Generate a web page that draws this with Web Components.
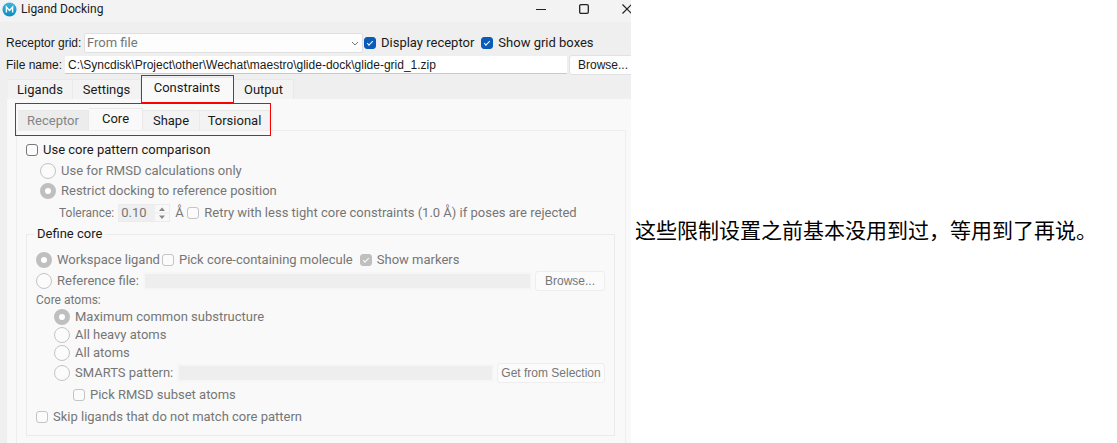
<!DOCTYPE html>
<html lang="en">
<head>
<meta charset="utf-8">
<title>Ligand Docking</title>
<style>
  body { margin: 0; background: #fff; color: #1a1a1a; font: 13px/18px Roboto, "Open Sans", sans-serif; }
</style>
</head>
<body>
<docking-page></docking-page>

<script>
const define = (name, html, setup) => {
  const template = document.createElement("template");
  template.innerHTML = html;
  customElements.define(name, class extends HTMLElement {
    constructor() {
      super();
      this.attachShadow({ mode: "open" }).append(template.content.cloneNode(true));
    }
    connectedCallback() {
      if (setup && !this.ready) { this.ready = true; setup(this, this.shadowRoot); }
    }
  });
};

define("option-box", `
  <style>
    :host { display: block; flex: none; }
    label { display: flex; align-items: center; gap: 5px; white-space: nowrap; }
    :host([disabled]) label { color: #767676; }
    input { appearance: none; box-sizing: border-box; flex: none; margin: 0; width: 12px; height: 12px;
            border: 1px solid #777; border-radius: 3px; background: #fbfbfb; display: grid; place-items: center; }
    input:disabled { border-color: #c4c4c4; }
    input:checked { border-color: #0a5cb8; background-color: #0a5cb8; }
    input:checked:disabled { border-color: #bfbfbf; background-color: #bfbfbf; }
    input:checked::after { content: ""; width: 5px; height: 2px; margin-bottom: 2px; border: solid #fff; border-width: 0 0 1px 1px; transform: rotate(-45deg); }
    input[type=radio] { width: 16px; height: 16px; border-radius: 50%; }
    input[type=radio]:checked { background: #fff; border: 5px solid #bfbfbf; }
    input[type=radio]:checked::after { content: none; }
  </style>
  <label><input><span><slot></slot></span></label>`,
  (host, root) => {
    const input = root.querySelector("input");
    input.type = host.getAttribute("type") || "checkbox";
    input.checked = host.hasAttribute("checked");
    input.disabled = host.hasAttribute("disabled");
  });

define("push-button", `
  <style>
    :host { display: flex; flex: none; height: 20px; }
    button { box-sizing: border-box; flex: 1; padding: 0; border: 1px solid #e2e2e2; border-radius: 3px; background: #fdfdfd;
             color: #1a1a1a; font: 12px/16px "Liberation Sans", Arial, sans-serif; white-space: nowrap; }
    button:disabled { color: #767676; border-color: #eee; background: #fbfbfb; }
  </style>
  <button type="button"><slot></slot></button>`,
  (host, root) => { root.querySelector("button").disabled = host.hasAttribute("disabled"); });

define("title-bar", `
  <style>
    :host { display: flex; align-items: center; gap: 4px; height: 18px; padding: 0 0 4px 2px; background: #f3f3f3; font-size: 12px; }
    .name { flex: 1; }
    .logo { flex: none; }
    button { display: grid; place-items: center; border: 0; padding: 0; background: none; width: 12px; height: 14px; color: #222; }
    .controls { display: flex; gap: 31px; margin-right: -2px; }
  </style>
  <svg class="logo" width="15" height="15" viewBox="0 0 15 15" aria-hidden="true">
    <defs><linearGradient id="g" x1="0" y1="0" x2="0" y2="1"><stop stop-color="#35b8e0"/><stop offset="1" stop-color="#0b8cc0"/></linearGradient></defs>
    <circle cx="7.5" cy="7.5" r="7" fill="url(#g)"/>
    <path d="M4.4 10.600V5L7.500 8.400l3.100-3.400v5.600" fill="none" stroke="#fff" stroke-width="1.4"/>
  </svg>
  <span class="name">Ligand Docking</span>
  <div class="controls">
    <button type="button" aria-label="Minimize"><svg width="10" height="10"><path d="M0 5.500h10" stroke="currentColor"/></svg></button>
    <button type="button" aria-label="Maximize"><svg width="10" height="10"><rect x=".7" y=".7" width="8.600" height="8.600" rx="1.200" fill="none" stroke="currentColor" stroke-width="1.300"/></svg></button>
    <button type="button" aria-label="Close"><svg width="10" height="10"><path d="M.5.5l9 9m0-9l-9 9" stroke="currentColor" stroke-width="1.200"/></svg></button>
  </div>`);

define("grid-source", `
  <style>
    :host { display: flex; flex-direction: column; gap: 2px; padding-left: 6px; }
    .row { display: flex; align-items: center; height: 20px; }
    .caption { flex: none; font: 12px/16px "Liberation Sans", Arial, sans-serif; }
    .grid .caption { width: 78px; }
    .file .caption { width: 59px; }
    .combo { position: relative; flex: 1; display: flex; margin-right: 1px; }
    select { appearance: none; box-sizing: border-box; width: 100%; height: 20px; margin: 0; padding: 0 2px; border: 1px solid #e0e0e0; border-radius: 2px;
             background: #fdfdfd; color: #767676; font: inherit; }
    .combo svg { position: absolute; right: 4px; top: 8px; pointer-events: none; }
    .checks { display: flex; gap: 7px; width: 267px; }
    .file input { box-sizing: border-box; flex: 1; min-width: 0; height: 18px; margin: 0 2px 0 0; padding: 0 3px; border: 0; border-bottom: 1px solid #c8c8c8;
                  background: #fff; color: #1a1a1a; font: 12px/16px "Liberation Sans", Arial, sans-serif; }
    push-button { width: 68px; margin-right: -6px; }
  </style>
  <div class="row grid">
    <label class="caption" for="source">Receptor grid:</label>
    <div class="combo">
      <select id="source"><option>From file</option></select>
      <svg width="8" height="6" aria-hidden="true"><path d="M1 1l3 3 3-3" fill="none" stroke="#777"/></svg>
    </div>
    <div class="checks"><option-box checked>Display receptor</option-box><option-box checked>Show grid boxes</option-box></div>
  </div>
  <div class="row file">
    <label class="caption" for="file">File name:</label>
    <input id="file" type="text" value="C:\\Syncdisk\\Project\\other\\Wechat\\maestro\\glide-dock\\glide-grid_1.zip">
    <push-button>Browse...</push-button>
  </div>`);

define("tab-item", `
  <style>
    :host { position: relative; display: flex; box-sizing: border-box; height: 20px; }
    button { box-sizing: border-box; flex: 1; padding: 0; border: 1px solid #e9e9e9; border-width: 1px 1px 0 0; background: #f3f3f3; color: inherit; font: inherit; white-space: nowrap; }
    :host([selected]) { height: 22px; }
    :host([selected]) button { background: #f9f9f9; padding-bottom: 2px; }
    button:disabled { background: #ececec; color: #858585; }
    :host([marked])::after { content: ""; position: absolute; inset: -2px 0 -4px 0; border: 1px solid #f00; }
  </style>
  <button type="button" role="tab"><slot></slot></button>`,
  (host, root) => {
    const button = root.querySelector("button");
    button.disabled = host.hasAttribute("disabled");
    button.setAttribute("aria-selected", host.hasAttribute("selected"));
  });

define("tab-strip", `
  <style>
    :host { position: relative; display: flex; align-items: flex-end; width: max-content; height: 22px; }
    :host([marked])::after { content: ""; position: absolute; inset: -5px -1px -6px -3px; border: 1px solid #f00; }
  </style>
  <slot></slot>`,
  host => host.setAttribute("role", "tablist"));

define("core-settings", `
  <style>
    :host { display: block; }
    .row { display: flex; align-items: center; height: 22px; }
    .radio { height: 20px; padding-left: 14px; }
    .tolerance { height: 24px; padding-left: 33px; color: #767676; }
    .small { font-size: 12px; }
    .spin { box-sizing: border-box; display: flex; width: 52px; height: 18px; margin: 0 5px 0 4px; border: 1px solid #ececec; background: #efefef; }
    .spin input { flex: 1; min-width: 0; margin: 0; padding: 0 2px; border: 0; background: none; color: #767676; font: inherit; line-height: 16px; }
    .spin svg { flex: none; background: #f8f8f8; }
    .unit { width: 12px; }
    fieldset { min-width: 0; margin: 0 10px 0 0; padding: 7px 9px; border: 1px solid #ebebeb; }
    legend { height: 18px; margin-left: -2px; padding: 0 3px; }
    .atoms { padding-left: 18px; height: 18px; }
    .pattern { height: 22px; }
    .caption { height: 16px; color: #767676; font-size: 12px; }
    .field { box-sizing: border-box; flex: 1; min-width: 0; height: 18px; margin: 0 3px 0 4px; padding: 0; border: 2px solid #f6f6f6; background: #eee; }
    .browse { width: 70px; }
    .get { width: 108px; }
    .first { height: 20px; }
    .first option-box + option-box { margin-left: 2px; }
    .first option-box + option-box + option-box { margin-left: 7px; }
    .subset { padding-left: 37px; }
  </style>
  <div class="row"><option-box>Use core pattern comparison</option-box></div>
  <div class="row radio"><option-box type="radio" disabled>Use for RMSD calculations only</option-box></div>
  <div class="row radio"><option-box type="radio" checked disabled>Restrict docking to reference position</option-box></div>
  <div class="row tolerance">
    <label for="tol" class="small">Tolerance:</label>
    <div class="spin">
      <input id="tol" type="text" value="0.10" disabled>
      <svg width="14" height="16" aria-hidden="true"><path d="M0 8h14" stroke="#eaeaea"/><path d="M4 6l3-3.500L10 6zM4 10.500l3 3.500 3-3.500z" fill="#888"/></svg>
    </div>
    <span class="unit">Å</span>
    <option-box disabled>Retry with less tight core constraints (1.0 Å) if poses are rejected</option-box>
  </div>
  <fieldset>
    <legend>Define core</legend>
    <div class="row first">
      <option-box type="radio" checked disabled>Workspace ligand</option-box>
      <option-box disabled>Pick core-containing molecule</option-box>
      <option-box checked disabled>Show markers</option-box>
    </div>
    <div class="row">
      <option-box type="radio" disabled>Reference file:</option-box>
      <input class="field" type="text" aria-label="Reference file" disabled>
      <push-button class="browse" disabled>Browse...</push-button>
    </div>
    <div class="row caption">Core atoms:</div>
    <div class="row atoms"><option-box type="radio" checked disabled>Maximum common substructure</option-box></div>
    <div class="row atoms"><option-box type="radio" disabled>All heavy atoms</option-box></div>
    <div class="row atoms"><option-box type="radio" disabled>All atoms</option-box></div>
    <div class="row atoms pattern">
      <option-box type="radio" disabled>SMARTS pattern:</option-box>
      <input class="field" type="text" aria-label="SMARTS pattern" disabled>
      <push-button class="get" disabled>Get from Selection</push-button>
    </div>
    <div class="row subset"><option-box disabled>Pick RMSD subset atoms</option-box></div>
    <div class="row"><option-box disabled>Skip ligands that do not match core pattern</option-box></div>
  </fieldset>`);

define("docking-window", `
  <style>
    :host { display: flex; flex-direction: column; min-width: 0; overflow: hidden; background: #efefef; }
    grid-source { margin-top: 11px; }
    .main { margin: 2px 0 0 8px; }
    .pane { flex: 1; display: flex; flex-direction: column; margin-left: 7px; padding: 9px 5px 0 9px; background: #f9f9f9; }
    .sub { margin-left: 2px; }
    .page { flex: 1; padding: 8px 0 0 9px; border: 1px solid #eee; border-bottom: 0; }
    .w1 { width: 65px; } .w2 { width: 68px; } .w3 { width: 93px; } .w4 { width: 60px; }
    .s1 { width: 71px; } .s2 { width: 54px; } .s3 { width: 57px; } .s4 { width: 70px; }
  </style>
  <title-bar></title-bar>
  <grid-source></grid-source>
  <tab-strip class="main">
    <tab-item class="w1">Ligands</tab-item><tab-item class="w2">Settings</tab-item><tab-item class="w3" selected marked>Constraints</tab-item><tab-item class="w4">Output</tab-item>
  </tab-strip>
  <div class="pane">
    <tab-strip class="sub" marked>
      <tab-item class="s1" disabled>Receptor</tab-item><tab-item class="s2" selected>Core</tab-item><tab-item class="s3">Shape</tab-item><tab-item class="s4">Torsional</tab-item>
    </tab-strip>
    <div class="page"><core-settings></core-settings></div>
  </div>`);

define("side-note", `
  <style>
    :host { display: flex; align-items: center; min-width: 0; }
    p { margin: 0; padding: 14px 0 0 4px; color: #000; font: 21px/28px "Noto Sans CJK SC", sans-serif; }
  </style>
  <p lang="zh-CN"><slot></slot></p>`);

define("docking-page", `
  <style>
    :host { display: grid; grid-template-columns: minmax(0, 631fr) minmax(0, 486fr); min-height: 100vh; }
  </style>
  <docking-window></docking-window>
  <side-note>这些限制设置之前基本没用到过，等用到了再说。</side-note>`);
</script>
</body>
</html>
